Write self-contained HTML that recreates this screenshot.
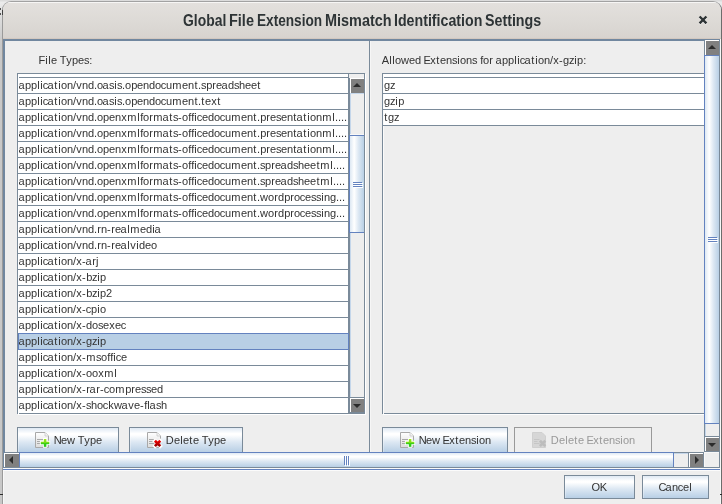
<!DOCTYPE html>
<html><head><meta charset="utf-8"><title>Global File Extension Mismatch Identification Settings</title>
<style>
html,body{margin:0;padding:0;}
body{width:722px;height:504px;overflow:hidden;background:linear-gradient(#dcdcdc 0px,#dcdcdc 1px,#ececec 2px,#e0e0e0 14px,#c8c8c8 44px,#c8c8c8 100%);position:relative;font-family:"Liberation Sans",sans-serif;}
div,span{box-sizing:border-box;}
.a{position:absolute;}
#txt{position:absolute;left:0;top:0;width:722px;height:504px;will-change:transform;}
.dj{position:absolute;white-space:nowrap;line-height:16px;height:16px;font-size:11.5px;color:#333;transform-origin:0 0;transform:scaleX(0.96);}
.dj i{position:absolute;top:0;font-style:normal;}
.tx{position:absolute;white-space:nowrap;line-height:16px;height:16px;transform-origin:0 0;}
#win{position:absolute;left:2px;top:1px;width:720px;height:520px;background:#eee;border:1px solid #9a9a9a;border-top-color:#a2a2a2;border-right-color:#6c6c6c;border-radius:9px 9px 0 0;overflow:hidden;}
#tb{position:absolute;left:0;top:0;width:718px;height:37px;background:linear-gradient(#e3e0dd,#dcd9d5 60%,#d7d3cf);border-top:1px solid #f7f6f5;border-bottom:1px solid #d2c8c0;}
</style></head><body>
<div id="win"><div id="tb"></div></div>
<svg class="a" style="left:697px;top:14px" width="12" height="12" viewBox="0 0 12 12"><path d="M2.6 3.4 L9.4 10.2 M9.4 3.4 L2.6 10.2" stroke="#f4f3f2" stroke-width="2.3" fill="none"/><path d="M2.6 2.5 L9.4 9.3 M9.4 2.5 L2.6 9.3" stroke="#2e3436" stroke-width="2.4" fill="none"/></svg>
<div class="a" style="left:3px;top:39px;width:718px;height:2px;background:#71879f;"></div>
<div class="a" style="left:3px;top:39px;width:2px;height:429px;background:#71879f;"></div>
<div class="a" style="left:3px;top:469px;width:718px;height:1px;background:#6382bf;"></div>
<div class="a" style="left:3px;top:468px;width:718px;height:1px;background:#fafafa;"></div>
<div class="a" style="left:3px;top:470px;width:718px;height:1px;background:#fbfbfb;"></div>
<div class="a" style="left:369px;top:41px;width:1px;height:411px;background:#7a8a99;"></div>
<div class="a" style="left:370px;top:41px;width:1px;height:411px;background:#f6f6f6;"></div>
<div class="a" style="left:17px;top:73px;width:348px;height:341px;background:#fff;border:1px solid #7a8a99"></div>
<div class="a" style="left:365px;top:74px;width:1px;height:341px;background:#fff;"></div>
<div class="a" style="left:18px;top:414px;width:348px;height:1px;background:#fff;"></div>
<div class="a" style="left:349px;top:74px;width:15px;height:4px;background:#eeeeee;"></div>
<div class="a" style="left:19px;top:77px;width:330px;height:1px;background:#7a8a99;"></div>
<div class="a" style="left:18px;top:93px;width:331px;height:1px;background:#7a8a99;"></div>
<div class="a" style="left:18px;top:109px;width:331px;height:1px;background:#7a8a99;"></div>
<div class="a" style="left:18px;top:125px;width:331px;height:1px;background:#7a8a99;"></div>
<div class="a" style="left:18px;top:141px;width:331px;height:1px;background:#7a8a99;"></div>
<div class="a" style="left:18px;top:157px;width:331px;height:1px;background:#7a8a99;"></div>
<div class="a" style="left:18px;top:173px;width:331px;height:1px;background:#7a8a99;"></div>
<div class="a" style="left:18px;top:189px;width:331px;height:1px;background:#7a8a99;"></div>
<div class="a" style="left:18px;top:205px;width:331px;height:1px;background:#7a8a99;"></div>
<div class="a" style="left:18px;top:221px;width:331px;height:1px;background:#7a8a99;"></div>
<div class="a" style="left:18px;top:237px;width:331px;height:1px;background:#7a8a99;"></div>
<div class="a" style="left:18px;top:253px;width:331px;height:1px;background:#7a8a99;"></div>
<div class="a" style="left:18px;top:269px;width:331px;height:1px;background:#7a8a99;"></div>
<div class="a" style="left:18px;top:285px;width:331px;height:1px;background:#7a8a99;"></div>
<div class="a" style="left:18px;top:301px;width:331px;height:1px;background:#7a8a99;"></div>
<div class="a" style="left:18px;top:317px;width:331px;height:1px;background:#7a8a99;"></div>
<div class="a" style="left:18px;top:333px;width:331px;height:1px;background:#7a8a99;"></div>
<div class="a" style="left:18px;top:349px;width:331px;height:1px;background:#7a8a99;"></div>
<div class="a" style="left:18px;top:365px;width:331px;height:1px;background:#7a8a99;"></div>
<div class="a" style="left:18px;top:381px;width:331px;height:1px;background:#7a8a99;"></div>
<div class="a" style="left:18px;top:397px;width:331px;height:1px;background:#7a8a99;"></div>
<div class="a" style="left:18px;top:413px;width:331px;height:1px;background:#7a8a99;"></div>
<div class="a" style="left:348px;top:74px;width:1px;height:340px;background:#7a8a99;"></div>
<div class="a" style="left:18px;top:413px;width:1px;height:1px;background:#fff;"></div>
<div class="a" style="left:18px;top:333px;width:331px;height:17px;background:#b8cfe5;border:1px solid #6382bf"></div>
<div class="a" style="left:349px;top:78px;width:15px;height:335px;background:#eeeeee;"></div>
<div class="a" style="left:349px;top:78px;width:1px;height:335px;background:#7a8a99;"></div>
<div class="a" style="left:350px;top:78px;width:1px;height:335px;background:#c4d6ea;"></div>
<div class="a" style="left:350px;top:78px;width:14px;height:1px;background:#fff;"></div>
<div class="a" style="left:350px;top:78px;width:1px;height:15px;background:#fff;"></div>
<div class="a" style="left:351px;top:79px;width:13px;height:14px;background:#808080;"></div>
<svg class="a" style="left:353px;top:83px" width="8" height="4" viewBox="0 0 8 4"><path d="M0 4 L4 0 L8 4 Z" fill="#2b2b2b"/></svg>
<div class="a" style="left:350px;top:93px;width:14px;height:1px;background:#c4d6ea;"></div>
<div class="a" style="left:350px;top:397px;width:14px;height:1px;background:#7a8a99;"></div>
<div class="a" style="left:350px;top:398px;width:14px;height:1px;background:#fff;"></div>
<div class="a" style="left:350px;top:398px;width:1px;height:15px;background:#fff;"></div>
<div class="a" style="left:351px;top:399px;width:13px;height:13px;background:#808080;"></div>
<div class="a" style="left:350px;top:412px;width:14px;height:1px;background:#7a8a99;"></div>
<svg class="a" style="left:353px;top:404px" width="8" height="4" viewBox="0 0 8 4"><path d="M0 0 L4 4 L8 0 Z" fill="#2b2b2b"/></svg>
<div class="a" style="left:349px;top:135px;width:15px;height:98px;background:linear-gradient(90deg,#dde8f3 0%,#ffffff 30%,#dde8f3 60%,#b8cfe5 100%);border:1px solid #6382bf;border-right:none"></div>
<div class="a" style="left:350px;top:134px;width:14px;height:1px;background:#f8f8f8;"></div>
<div class="a" style="left:353px;top:182px;width:9px;height:1px;background:#6382bf;"></div>
<div class="a" style="left:354px;top:183px;width:9px;height:1px;background:#fff;"></div>
<div class="a" style="left:353px;top:184px;width:9px;height:1px;background:#6382bf;"></div>
<div class="a" style="left:354px;top:185px;width:9px;height:1px;background:#fff;"></div>
<div class="a" style="left:353px;top:186px;width:9px;height:1px;background:#6382bf;"></div>
<div class="a" style="left:354px;top:187px;width:9px;height:1px;background:#fff;"></div>
<div class="a" style="left:382px;top:73px;width:323px;height:341px;background:#eeeeee;border:1px solid #7a8a99"></div>
<div class="a" style="left:383px;top:74px;width:321px;height:52px;background:#fff;"></div>
<div class="a" style="left:383px;top:74px;width:1px;height:339px;background:#fbfbfb;"></div>
<div class="a" style="left:383px;top:414px;width:321px;height:1px;background:#fff;"></div>
<div class="a" style="left:383px;top:413px;width:1px;height:1px;background:#fbfbfb;"></div>
<div class="a" style="left:384px;top:77px;width:320px;height:1px;background:#7a8a99;"></div>
<div class="a" style="left:383px;top:93px;width:321px;height:1px;background:#7a8a99;"></div>
<div class="a" style="left:383px;top:109px;width:321px;height:1px;background:#7a8a99;"></div>
<div class="a" style="left:383px;top:125px;width:321px;height:1px;background:#7a8a99;"></div>
<div class="a" style="left:17px;top:427px;width:102px;height:26px;background:linear-gradient(#dfe9f4 0%,#ffffff 23%,#ffffff 29%,#dde8f3 58%,#b8cfe5 100%);border:1px solid #7a8a99;box-shadow:inset 1px 0 0 rgba(255,255,255,0.3)"></div>
<svg class="a" style="left:35px;top:432px" width="16" height="17" viewBox="0 0 16 17"><defs><linearGradient id="pg35" x1="0" y1="0" x2="0" y2="1"><stop offset="0" stop-color="#ffffff"/><stop offset="1" stop-color="#dcdcdc"/></linearGradient><linearGradient id="gr35" x1="0" y1="0" x2="0" y2="1"><stop offset="0" stop-color="#a6e81c"/><stop offset="1" stop-color="#14c416"/></linearGradient><linearGradient id="rd35" x1="0" y1="0" x2="0" y2="1"><stop offset="0" stop-color="#ee0000"/><stop offset="1" stop-color="#990000"/></linearGradient></defs><path d="M0.5 0.5 H10 L13.5 4 V15.5 H0.5 Z" fill="url(#pg35)" stroke="#a8a8a8"/><path d="M10 0.5 V4 H13.5" fill="#f6f6f6" stroke="#c8c8c8" stroke-width="0.8"/><path d="M2 7.5H8M2 9.5H5M2 11.5H5" stroke="#a9a9a9" stroke-width="1"/><path d="M10.1 6.1 V15.7 M4.9 10.95 H15.2" stroke="#fff" stroke-width="4.2"/><rect x="8.85" y="7" width="2.5" height="7.8" fill="url(#gr35)"/><rect x="5.8" y="9.7" width="8.5" height="2.5" fill="url(#gr35)"/></svg>
<div class="a" style="left:129px;top:427px;width:114px;height:26px;background:linear-gradient(#dfe9f4 0%,#ffffff 23%,#ffffff 29%,#dde8f3 58%,#b8cfe5 100%);border:1px solid #7a8a99;box-shadow:inset 1px 0 0 rgba(255,255,255,0.3)"></div>
<svg class="a" style="left:147px;top:432px" width="16" height="17" viewBox="0 0 16 17"><defs><linearGradient id="pg147" x1="0" y1="0" x2="0" y2="1"><stop offset="0" stop-color="#ffffff"/><stop offset="1" stop-color="#dcdcdc"/></linearGradient><linearGradient id="gr147" x1="0" y1="0" x2="0" y2="1"><stop offset="0" stop-color="#a6e81c"/><stop offset="1" stop-color="#14c416"/></linearGradient><linearGradient id="rd147" x1="0" y1="0" x2="0" y2="1"><stop offset="0" stop-color="#ee0000"/><stop offset="1" stop-color="#990000"/></linearGradient></defs><path d="M0.5 0.5 H10 L13.5 4 V15.5 H0.5 Z" fill="url(#pg147)" stroke="#a8a8a8"/><path d="M10 0.5 V4 H13.5" fill="#f6f6f6" stroke="#c8c8c8" stroke-width="0.8"/><path d="M2 7.5H7.5M2 9.5H5.5M2 11.5H7.5" stroke="#a9a9a9" stroke-width="1"/><path d="M8.1 8.9 L13.1 13.9 M13.1 8.9 L8.1 13.9" stroke="#fff" stroke-width="3.9" stroke-linecap="square"/><path d="M7.9 8.7 L13.3 14.1 M13.3 8.7 L7.9 14.1" stroke="url(#rd147)" stroke-width="2.7"/></svg>
<div class="a" style="left:382px;top:427px;width:126px;height:26px;background:linear-gradient(#dfe9f4 0%,#ffffff 23%,#ffffff 29%,#dde8f3 58%,#b8cfe5 100%);border:1px solid #7a8a99;box-shadow:inset 1px 0 0 rgba(255,255,255,0.3)"></div>
<svg class="a" style="left:400px;top:432px" width="16" height="17" viewBox="0 0 16 17"><defs><linearGradient id="pg400" x1="0" y1="0" x2="0" y2="1"><stop offset="0" stop-color="#ffffff"/><stop offset="1" stop-color="#dcdcdc"/></linearGradient><linearGradient id="gr400" x1="0" y1="0" x2="0" y2="1"><stop offset="0" stop-color="#a6e81c"/><stop offset="1" stop-color="#14c416"/></linearGradient><linearGradient id="rd400" x1="0" y1="0" x2="0" y2="1"><stop offset="0" stop-color="#ee0000"/><stop offset="1" stop-color="#990000"/></linearGradient></defs><path d="M0.5 0.5 H10 L13.5 4 V15.5 H0.5 Z" fill="url(#pg400)" stroke="#a8a8a8"/><path d="M10 0.5 V4 H13.5" fill="#f6f6f6" stroke="#c8c8c8" stroke-width="0.8"/><path d="M2 7.5H8M2 9.5H5M2 11.5H5" stroke="#a9a9a9" stroke-width="1"/><path d="M10.1 6.1 V15.7 M4.9 10.95 H15.2" stroke="#fff" stroke-width="4.2"/><rect x="8.85" y="7" width="2.5" height="7.8" fill="url(#gr400)"/><rect x="5.8" y="9.7" width="8.5" height="2.5" fill="url(#gr400)"/></svg>
<div class="a" style="left:514px;top:427px;width:138px;height:26px;background:#eeeeee;border:1px solid #999"></div>
<svg class="a" style="left:532px;top:432px" width="16" height="17" viewBox="0 0 16 17"><path d="M0.5 0.5 H10 L13.5 4 V15.5 H0.5 Z" fill="#d6d6d6" stroke="#cfcfcf"/><path d="M2 7.5H7.5M2 9.5H5.5M2 11.5H7.5" stroke="#c6c6c6" stroke-width="1"/><path d="M7.9 8.7 L13.3 14.1 M13.3 8.7 L7.9 14.1" stroke="#bdbdbd" stroke-width="2.7"/></svg>
<div class="a" style="left:5px;top:452px;width:700px;height:16px;background:#eeeeee;"></div>
<div class="a" style="left:5px;top:452px;width:700px;height:1px;background:#7a8a99;"></div>
<div class="a" style="left:5px;top:467px;width:715px;height:1px;background:#7a8a99;"></div>
<div class="a" style="left:5px;top:453px;width:700px;height:1px;background:#c4d6ea;"></div>
<div class="a" style="left:4px;top:453px;width:15px;height:1px;background:#fff;"></div>
<div class="a" style="left:4px;top:453px;width:1px;height:14px;background:#fff;"></div>
<div class="a" style="left:5px;top:454px;width:14px;height:13px;background:#808080;"></div>
<svg class="a" style="left:9px;top:456px" width="4" height="8" viewBox="0 0 4 8"><path d="M4 0 L0 4 L4 8 Z" fill="#2b2b2b"/></svg>
<div class="a" style="left:688px;top:453px;width:1px;height:14px;background:#7a8a99;"></div>
<div class="a" style="left:689px;top:453px;width:15px;height:1px;background:#fff;"></div>
<div class="a" style="left:689px;top:453px;width:1px;height:14px;background:#fff;"></div>
<div class="a" style="left:690px;top:454px;width:13px;height:13px;background:#808080;"></div>
<div class="a" style="left:703px;top:452px;width:1px;height:16px;background:#7a8a99;"></div>
<svg class="a" style="left:695px;top:456px" width="4" height="8" viewBox="0 0 4 8"><path d="M0 0 L4 4 L0 8 Z" fill="#2b2b2b"/></svg>
<div class="a" style="left:19px;top:452px;width:655px;height:15px;background:linear-gradient(#dfe9f4 0%,#ffffff 23%,#ffffff 29%,#dde8f3 58%,#b8cfe5 100%);border:1px solid #6382bf;border-bottom:none"></div>
<div class="a" style="left:344px;top:456px;width:1px;height:9px;background:#6382bf;"></div>
<div class="a" style="left:345px;top:457px;width:1px;height:9px;background:#fff;"></div>
<div class="a" style="left:346px;top:456px;width:1px;height:9px;background:#6382bf;"></div>
<div class="a" style="left:347px;top:457px;width:1px;height:9px;background:#fff;"></div>
<div class="a" style="left:348px;top:456px;width:1px;height:9px;background:#6382bf;"></div>
<div class="a" style="left:349px;top:457px;width:1px;height:9px;background:#fff;"></div>
<div class="a" style="left:719px;top:41px;width:1px;height:427px;background:#7a8a99;"></div>
<div class="a" style="left:720px;top:39px;width:1px;height:470px;background:#f8f8f8;"></div>
<div class="a" style="left:704px;top:40px;width:15px;height:412px;background:#eeeeee;"></div>
<div class="a" style="left:704px;top:40px;width:1px;height:412px;background:#7a8a99;"></div>
<div class="a" style="left:705px;top:40px;width:1px;height:412px;background:#c4d6ea;"></div>
<div class="a" style="left:705px;top:40px;width:14px;height:1px;background:#fff;"></div>
<div class="a" style="left:705px;top:40px;width:1px;height:15px;background:#fff;"></div>
<div class="a" style="left:706px;top:41px;width:13px;height:14px;background:#808080;"></div>
<svg class="a" style="left:708px;top:45px" width="8" height="4" viewBox="0 0 8 4"><path d="M0 4 L4 0 L8 4 Z" fill="#2b2b2b"/></svg>
<div class="a" style="left:705px;top:55px;width:14px;height:1px;background:#c4d6ea;"></div>
<div class="a" style="left:705px;top:436px;width:14px;height:1px;background:#7a8a99;"></div>
<div class="a" style="left:705px;top:437px;width:14px;height:1px;background:#fff;"></div>
<div class="a" style="left:705px;top:437px;width:1px;height:15px;background:#fff;"></div>
<div class="a" style="left:706px;top:438px;width:13px;height:13px;background:#808080;"></div>
<div class="a" style="left:705px;top:451px;width:14px;height:1px;background:#7a8a99;"></div>
<svg class="a" style="left:708px;top:443px" width="8" height="4" viewBox="0 0 8 4"><path d="M0 0 L4 4 L8 0 Z" fill="#2b2b2b"/></svg>
<div class="a" style="left:704px;top:55px;width:15px;height:369px;background:linear-gradient(90deg,#dde8f3 0%,#ffffff 30%,#dde8f3 60%,#b8cfe5 100%);border:1px solid #6382bf;border-right:none"></div>
<div class="a" style="left:708px;top:237px;width:9px;height:1px;background:#6382bf;"></div>
<div class="a" style="left:709px;top:238px;width:9px;height:1px;background:#fff;"></div>
<div class="a" style="left:708px;top:239px;width:9px;height:1px;background:#6382bf;"></div>
<div class="a" style="left:709px;top:240px;width:9px;height:1px;background:#fff;"></div>
<div class="a" style="left:708px;top:241px;width:9px;height:1px;background:#6382bf;"></div>
<div class="a" style="left:709px;top:242px;width:9px;height:1px;background:#fff;"></div>
<div class="a" style="left:704px;top:452px;width:15px;height:15px;background:#eeeeee;"></div>
<div class="a" style="left:704px;top:452px;width:15px;height:1px;background:#f8f8f8;"></div>
<div class="a" style="left:704px;top:452px;width:1px;height:15px;background:#f8f8f8;"></div>
<div class="a" style="left:564px;top:475px;width:71px;height:24px;background:linear-gradient(#dfe9f4 0%,#ffffff 23%,#ffffff 29%,#dde8f3 58%,#b8cfe5 100%);border:1px solid #7a8a99;box-shadow:inset 1px 0 0 rgba(255,255,255,0.3)"></div>
<div class="a" style="left:642px;top:475px;width:67px;height:24px;background:linear-gradient(#dfe9f4 0%,#ffffff 23%,#ffffff 29%,#dde8f3 58%,#b8cfe5 100%);border:1px solid #7a8a99;box-shadow:inset 1px 0 0 rgba(255,255,255,0.3)"></div>
<div class="a" style="left:3px;top:471px;width:1px;height:40px;background:#f8f8f8;"></div>
<div class="a" style="left:0px;top:494px;width:3px;height:1px;background:#2a2a2a;"></div>
<div class="a" style="left:0px;top:8px;width:1px;height:2px;background:#555;"></div>
<div class="a" style="left:0px;top:13px;width:1px;height:2px;background:#555;"></div>
<div class="a" style="left:2px;top:10px;width:1px;height:5px;background:#444;"></div>
<div class="a" style="left:720px;top:494px;width:2px;height:1px;background:#2a2a2a;"></div>
<div id="txt">
<span class="tx" id="t1" style="left:183.26px;top:12.5px;font-size:16px;font-weight:bold;color:#2e3436;letter-spacing:0.000px;transform:scaleX(0.8687);">Global</span>
<span class="tx" id="t2" style="left:228.58px;top:12.5px;font-size:16px;font-weight:bold;color:#2e3436;letter-spacing:0.000px;transform:scaleX(0.9043);">File</span>
<span class="tx" id="t3" style="left:257.04px;top:12.5px;font-size:16px;font-weight:bold;color:#2e3436;letter-spacing:0.000px;transform:scaleX(0.8511);">Extension</span>
<span class="tx" id="t4" style="left:324.59px;top:12.5px;font-size:16px;font-weight:bold;color:#2e3436;letter-spacing:0.000px;transform:scaleX(0.9017);">Mismatch</span>
<span class="tx" id="t5" style="left:394.10px;top:12.5px;font-size:16px;font-weight:bold;color:#2e3436;letter-spacing:0.000px;transform:scaleX(0.8872);">Identification</span>
<span class="tx" id="t6" style="left:485.16px;top:12.5px;font-size:16px;font-weight:bold;color:#2e3436;letter-spacing:0.000px;transform:scaleX(0.8903);">Settings</span>
<div class="dj" id="r0" style="left:19px;top:77.0px;"><i style="left:-0.44px">a</i><i style="left:6.38px">p</i><i style="left:12.63px">p</i><i style="left:18.90px">l</i><i style="left:22.04px">i</i><i style="left:24.83px">c</i><i style="left:29.77px">a</i><i style="left:36.85px">t</i><i style="left:40.79px">i</i><i style="left:43.71px">o</i><i style="left:50.09px">n</i><i style="left:56.39px">/</i><i style="left:59.55px">v</i><i style="left:65.72px">n</i><i style="left:71.89px">d</i><i style="left:78.16px">.</i><i style="left:81.21px">o</i><i style="left:87.06px">a</i><i style="left:93.64px">s</i><i style="left:99.12px">i</i><i style="left:101.97px">s</i><i style="left:107.33px">.</i><i style="left:110.37px">o</i><i style="left:116.80px">p</i><i style="left:122.91px">e</i><i style="left:129.26px">n</i><i style="left:135.44px">d</i><i style="left:141.62px">o</i><i style="left:147.75px">c</i><i style="left:153.17px">u</i><i style="left:159.63px">m</i><i style="left:169.79px">e</i><i style="left:176.13px">n</i><i style="left:182.69px">t</i><i style="left:186.49px">.</i><i style="left:189.47px">s</i><i style="left:194.93px">p</i><i style="left:201.43px">r</i><i style="left:205.20px">e</i><i style="left:211.02px">a</i><i style="left:217.73px">d</i><i style="left:223.84px">s</i><i style="left:229.24px">h</i><i style="left:235.41px">e</i><i style="left:241.66px">e</i><i style="left:248.31px">t</i></div>
<div class="dj" id="r1" style="left:19px;top:93.0px;"><i style="left:-0.44px">a</i><i style="left:6.38px">p</i><i style="left:12.63px">p</i><i style="left:18.90px">l</i><i style="left:22.04px">i</i><i style="left:24.83px">c</i><i style="left:29.77px">a</i><i style="left:36.85px">t</i><i style="left:40.79px">i</i><i style="left:43.71px">o</i><i style="left:50.09px">n</i><i style="left:56.39px">/</i><i style="left:59.55px">v</i><i style="left:65.72px">n</i><i style="left:71.89px">d</i><i style="left:78.16px">.</i><i style="left:81.21px">o</i><i style="left:87.06px">a</i><i style="left:93.64px">s</i><i style="left:99.12px">i</i><i style="left:101.97px">s</i><i style="left:107.33px">.</i><i style="left:110.37px">o</i><i style="left:116.80px">p</i><i style="left:122.91px">e</i><i style="left:129.26px">n</i><i style="left:135.44px">d</i><i style="left:141.62px">o</i><i style="left:147.75px">c</i><i style="left:153.17px">u</i><i style="left:159.63px">m</i><i style="left:169.79px">e</i><i style="left:176.13px">n</i><i style="left:182.69px">t</i><i style="left:186.49px">.</i><i style="left:189.98px">t</i><i style="left:193.74px">e</i><i style="left:200.15px">x</i><i style="left:206.64px">t</i></div>
<div class="dj" id="r2" style="left:19px;top:109.0px;"><i style="left:-0.44px">a</i><i style="left:6.38px">p</i><i style="left:12.63px">p</i><i style="left:18.90px">l</i><i style="left:22.04px">i</i><i style="left:24.83px">c</i><i style="left:29.77px">a</i><i style="left:36.85px">t</i><i style="left:40.79px">i</i><i style="left:43.71px">o</i><i style="left:50.09px">n</i><i style="left:56.39px">/</i><i style="left:59.55px">v</i><i style="left:65.72px">n</i><i style="left:71.89px">d</i><i style="left:78.16px">.</i><i style="left:81.21px">o</i><i style="left:87.63px">p</i><i style="left:93.74px">e</i><i style="left:100.09px">n</i><i style="left:106.40px">x</i><i style="left:112.76px">m</i><i style="left:123.07px">l</i><i style="left:126.39px">f</i><i style="left:129.12px">o</i><i style="left:135.80px">r</i><i style="left:139.84px">m</i><i style="left:149.56px">a</i><i style="left:156.64px">t</i><i style="left:160.30px">s</i><i style="left:165.57px">-</i><i style="left:169.75px">o</i><i style="left:176.39px">f</i><i style="left:179.51px">f</i><i style="left:182.45px">i</i><i style="left:185.25px">c</i><i style="left:190.62px">e</i><i style="left:196.89px">d</i><i style="left:203.08px">o</i><i style="left:209.21px">c</i><i style="left:214.63px">u</i><i style="left:221.09px">m</i><i style="left:231.24px">e</i><i style="left:237.59px">n</i><i style="left:244.14px">t</i><i style="left:247.95px">.</i><i style="left:251.18px">p</i><i style="left:257.68px">r</i><i style="left:261.45px">e</i><i style="left:267.59px">s</i><i style="left:272.91px">e</i><i style="left:279.26px">n</i><i style="left:285.81px">t</i><i style="left:289.14px">a</i><i style="left:296.23px">t</i><i style="left:300.16px">i</i><i style="left:303.08px">o</i><i style="left:309.47px">n</i><i style="left:315.88px">m</i><i style="left:326.20px">l</i><i style="left:329.20px">.</i><i style="left:332.33px">.</i><i style="left:335.45px">.</i><i style="left:338.58px">.</i></div>
<div class="dj" id="r3" style="left:19px;top:125.0px;"><i style="left:-0.44px">a</i><i style="left:6.38px">p</i><i style="left:12.63px">p</i><i style="left:18.90px">l</i><i style="left:22.04px">i</i><i style="left:24.83px">c</i><i style="left:29.77px">a</i><i style="left:36.85px">t</i><i style="left:40.79px">i</i><i style="left:43.71px">o</i><i style="left:50.09px">n</i><i style="left:56.39px">/</i><i style="left:59.55px">v</i><i style="left:65.72px">n</i><i style="left:71.89px">d</i><i style="left:78.16px">.</i><i style="left:81.21px">o</i><i style="left:87.63px">p</i><i style="left:93.74px">e</i><i style="left:100.09px">n</i><i style="left:106.40px">x</i><i style="left:112.76px">m</i><i style="left:123.07px">l</i><i style="left:126.39px">f</i><i style="left:129.12px">o</i><i style="left:135.80px">r</i><i style="left:139.84px">m</i><i style="left:149.56px">a</i><i style="left:156.64px">t</i><i style="left:160.30px">s</i><i style="left:165.57px">-</i><i style="left:169.75px">o</i><i style="left:176.39px">f</i><i style="left:179.51px">f</i><i style="left:182.45px">i</i><i style="left:185.25px">c</i><i style="left:190.62px">e</i><i style="left:196.89px">d</i><i style="left:203.08px">o</i><i style="left:209.21px">c</i><i style="left:214.63px">u</i><i style="left:221.09px">m</i><i style="left:231.24px">e</i><i style="left:237.59px">n</i><i style="left:244.14px">t</i><i style="left:247.95px">.</i><i style="left:251.18px">p</i><i style="left:257.68px">r</i><i style="left:261.45px">e</i><i style="left:267.59px">s</i><i style="left:272.91px">e</i><i style="left:279.26px">n</i><i style="left:285.81px">t</i><i style="left:289.14px">a</i><i style="left:296.23px">t</i><i style="left:300.16px">i</i><i style="left:303.08px">o</i><i style="left:309.47px">n</i><i style="left:315.88px">m</i><i style="left:326.20px">l</i><i style="left:329.20px">.</i><i style="left:332.33px">.</i><i style="left:335.45px">.</i><i style="left:338.58px">.</i></div>
<div class="dj" id="r4" style="left:19px;top:141.0px;"><i style="left:-0.44px">a</i><i style="left:6.38px">p</i><i style="left:12.63px">p</i><i style="left:18.90px">l</i><i style="left:22.04px">i</i><i style="left:24.83px">c</i><i style="left:29.77px">a</i><i style="left:36.85px">t</i><i style="left:40.79px">i</i><i style="left:43.71px">o</i><i style="left:50.09px">n</i><i style="left:56.39px">/</i><i style="left:59.55px">v</i><i style="left:65.72px">n</i><i style="left:71.89px">d</i><i style="left:78.16px">.</i><i style="left:81.21px">o</i><i style="left:87.63px">p</i><i style="left:93.74px">e</i><i style="left:100.09px">n</i><i style="left:106.40px">x</i><i style="left:112.76px">m</i><i style="left:123.07px">l</i><i style="left:126.39px">f</i><i style="left:129.12px">o</i><i style="left:135.80px">r</i><i style="left:139.84px">m</i><i style="left:149.56px">a</i><i style="left:156.64px">t</i><i style="left:160.30px">s</i><i style="left:165.57px">-</i><i style="left:169.75px">o</i><i style="left:176.39px">f</i><i style="left:179.51px">f</i><i style="left:182.45px">i</i><i style="left:185.25px">c</i><i style="left:190.62px">e</i><i style="left:196.89px">d</i><i style="left:203.08px">o</i><i style="left:209.21px">c</i><i style="left:214.63px">u</i><i style="left:221.09px">m</i><i style="left:231.24px">e</i><i style="left:237.59px">n</i><i style="left:244.14px">t</i><i style="left:247.95px">.</i><i style="left:251.18px">p</i><i style="left:257.68px">r</i><i style="left:261.45px">e</i><i style="left:267.59px">s</i><i style="left:272.91px">e</i><i style="left:279.26px">n</i><i style="left:285.81px">t</i><i style="left:289.14px">a</i><i style="left:296.23px">t</i><i style="left:300.16px">i</i><i style="left:303.08px">o</i><i style="left:309.47px">n</i><i style="left:315.88px">m</i><i style="left:326.20px">l</i><i style="left:329.20px">.</i><i style="left:332.33px">.</i><i style="left:335.45px">.</i><i style="left:338.58px">.</i></div>
<div class="dj" id="r5" style="left:19px;top:157.0px;"><i style="left:-0.44px">a</i><i style="left:6.38px">p</i><i style="left:12.63px">p</i><i style="left:18.90px">l</i><i style="left:22.04px">i</i><i style="left:24.83px">c</i><i style="left:29.77px">a</i><i style="left:36.85px">t</i><i style="left:40.79px">i</i><i style="left:43.71px">o</i><i style="left:50.09px">n</i><i style="left:56.39px">/</i><i style="left:59.55px">v</i><i style="left:65.72px">n</i><i style="left:71.89px">d</i><i style="left:78.16px">.</i><i style="left:81.21px">o</i><i style="left:87.63px">p</i><i style="left:93.74px">e</i><i style="left:100.09px">n</i><i style="left:106.40px">x</i><i style="left:112.76px">m</i><i style="left:123.07px">l</i><i style="left:126.39px">f</i><i style="left:129.12px">o</i><i style="left:135.80px">r</i><i style="left:139.84px">m</i><i style="left:149.56px">a</i><i style="left:156.64px">t</i><i style="left:160.30px">s</i><i style="left:165.57px">-</i><i style="left:169.75px">o</i><i style="left:176.39px">f</i><i style="left:179.51px">f</i><i style="left:182.45px">i</i><i style="left:185.25px">c</i><i style="left:190.62px">e</i><i style="left:196.89px">d</i><i style="left:203.08px">o</i><i style="left:209.21px">c</i><i style="left:214.63px">u</i><i style="left:221.09px">m</i><i style="left:231.24px">e</i><i style="left:237.59px">n</i><i style="left:244.14px">t</i><i style="left:247.95px">.</i><i style="left:250.93px">s</i><i style="left:256.38px">p</i><i style="left:262.89px">r</i><i style="left:266.66px">e</i><i style="left:272.48px">a</i><i style="left:279.19px">d</i><i style="left:285.30px">s</i><i style="left:290.70px">h</i><i style="left:296.87px">e</i><i style="left:303.12px">e</i><i style="left:309.77px">t</i><i style="left:313.80px">m</i><i style="left:324.11px">l</i><i style="left:327.12px">.</i><i style="left:330.24px">.</i><i style="left:333.37px">.</i><i style="left:336.49px">.</i></div>
<div class="dj" id="r6" style="left:19px;top:173.0px;"><i style="left:-0.44px">a</i><i style="left:6.38px">p</i><i style="left:12.63px">p</i><i style="left:18.90px">l</i><i style="left:22.04px">i</i><i style="left:24.83px">c</i><i style="left:29.77px">a</i><i style="left:36.85px">t</i><i style="left:40.79px">i</i><i style="left:43.71px">o</i><i style="left:50.09px">n</i><i style="left:56.39px">/</i><i style="left:59.55px">v</i><i style="left:65.72px">n</i><i style="left:71.89px">d</i><i style="left:78.16px">.</i><i style="left:81.21px">o</i><i style="left:87.63px">p</i><i style="left:93.74px">e</i><i style="left:100.09px">n</i><i style="left:106.40px">x</i><i style="left:112.76px">m</i><i style="left:123.07px">l</i><i style="left:126.39px">f</i><i style="left:129.12px">o</i><i style="left:135.80px">r</i><i style="left:139.84px">m</i><i style="left:149.56px">a</i><i style="left:156.64px">t</i><i style="left:160.30px">s</i><i style="left:165.57px">-</i><i style="left:169.75px">o</i><i style="left:176.39px">f</i><i style="left:179.51px">f</i><i style="left:182.45px">i</i><i style="left:185.25px">c</i><i style="left:190.62px">e</i><i style="left:196.89px">d</i><i style="left:203.08px">o</i><i style="left:209.21px">c</i><i style="left:214.63px">u</i><i style="left:221.09px">m</i><i style="left:231.24px">e</i><i style="left:237.59px">n</i><i style="left:244.14px">t</i><i style="left:247.95px">.</i><i style="left:250.93px">s</i><i style="left:256.38px">p</i><i style="left:262.89px">r</i><i style="left:266.66px">e</i><i style="left:272.48px">a</i><i style="left:279.19px">d</i><i style="left:285.30px">s</i><i style="left:290.70px">h</i><i style="left:296.87px">e</i><i style="left:303.12px">e</i><i style="left:309.77px">t</i><i style="left:313.80px">m</i><i style="left:324.11px">l</i><i style="left:327.12px">.</i><i style="left:330.24px">.</i><i style="left:333.37px">.</i><i style="left:336.49px">.</i></div>
<div class="dj" id="r7" style="left:19px;top:189.0px;"><i style="left:-0.44px">a</i><i style="left:6.38px">p</i><i style="left:12.63px">p</i><i style="left:18.90px">l</i><i style="left:22.04px">i</i><i style="left:24.83px">c</i><i style="left:29.77px">a</i><i style="left:36.85px">t</i><i style="left:40.79px">i</i><i style="left:43.71px">o</i><i style="left:50.09px">n</i><i style="left:56.39px">/</i><i style="left:59.55px">v</i><i style="left:65.72px">n</i><i style="left:71.89px">d</i><i style="left:78.16px">.</i><i style="left:81.21px">o</i><i style="left:87.63px">p</i><i style="left:93.74px">e</i><i style="left:100.09px">n</i><i style="left:106.40px">x</i><i style="left:112.76px">m</i><i style="left:123.07px">l</i><i style="left:126.39px">f</i><i style="left:129.12px">o</i><i style="left:135.80px">r</i><i style="left:139.84px">m</i><i style="left:149.56px">a</i><i style="left:156.64px">t</i><i style="left:160.30px">s</i><i style="left:165.57px">-</i><i style="left:169.75px">o</i><i style="left:176.39px">f</i><i style="left:179.51px">f</i><i style="left:182.45px">i</i><i style="left:185.25px">c</i><i style="left:190.62px">e</i><i style="left:196.89px">d</i><i style="left:203.08px">o</i><i style="left:209.21px">c</i><i style="left:214.63px">u</i><i style="left:221.09px">m</i><i style="left:231.24px">e</i><i style="left:237.59px">n</i><i style="left:244.14px">t</i><i style="left:247.95px">.</i><i style="left:251.10px">w</i><i style="left:259.33px">o</i><i style="left:266.01px">r</i><i style="left:269.81px">d</i><i style="left:276.18px">p</i><i style="left:282.68px">r</i><i style="left:286.42px">o</i><i style="left:292.54px">c</i><i style="left:297.91px">e</i><i style="left:304.05px">s</i><i style="left:309.26px">s</i><i style="left:314.74px">i</i><i style="left:317.80px">n</i><i style="left:323.98px">g</i><i style="left:330.24px">.</i><i style="left:333.37px">.</i><i style="left:336.49px">.</i></div>
<div class="dj" id="r8" style="left:19px;top:205.0px;"><i style="left:-0.44px">a</i><i style="left:6.38px">p</i><i style="left:12.63px">p</i><i style="left:18.90px">l</i><i style="left:22.04px">i</i><i style="left:24.83px">c</i><i style="left:29.77px">a</i><i style="left:36.85px">t</i><i style="left:40.79px">i</i><i style="left:43.71px">o</i><i style="left:50.09px">n</i><i style="left:56.39px">/</i><i style="left:59.55px">v</i><i style="left:65.72px">n</i><i style="left:71.89px">d</i><i style="left:78.16px">.</i><i style="left:81.21px">o</i><i style="left:87.63px">p</i><i style="left:93.74px">e</i><i style="left:100.09px">n</i><i style="left:106.40px">x</i><i style="left:112.76px">m</i><i style="left:123.07px">l</i><i style="left:126.39px">f</i><i style="left:129.12px">o</i><i style="left:135.80px">r</i><i style="left:139.84px">m</i><i style="left:149.56px">a</i><i style="left:156.64px">t</i><i style="left:160.30px">s</i><i style="left:165.57px">-</i><i style="left:169.75px">o</i><i style="left:176.39px">f</i><i style="left:179.51px">f</i><i style="left:182.45px">i</i><i style="left:185.25px">c</i><i style="left:190.62px">e</i><i style="left:196.89px">d</i><i style="left:203.08px">o</i><i style="left:209.21px">c</i><i style="left:214.63px">u</i><i style="left:221.09px">m</i><i style="left:231.24px">e</i><i style="left:237.59px">n</i><i style="left:244.14px">t</i><i style="left:247.95px">.</i><i style="left:251.10px">w</i><i style="left:259.33px">o</i><i style="left:266.01px">r</i><i style="left:269.81px">d</i><i style="left:276.18px">p</i><i style="left:282.68px">r</i><i style="left:286.42px">o</i><i style="left:292.54px">c</i><i style="left:297.91px">e</i><i style="left:304.05px">s</i><i style="left:309.26px">s</i><i style="left:314.74px">i</i><i style="left:317.80px">n</i><i style="left:323.98px">g</i><i style="left:330.24px">.</i><i style="left:333.37px">.</i><i style="left:336.49px">.</i></div>
<div class="dj" id="r9" style="left:19px;top:221.0px;"><i style="left:-0.44px">a</i><i style="left:6.38px">p</i><i style="left:12.63px">p</i><i style="left:18.90px">l</i><i style="left:22.04px">i</i><i style="left:24.83px">c</i><i style="left:29.77px">a</i><i style="left:36.85px">t</i><i style="left:40.79px">i</i><i style="left:43.71px">o</i><i style="left:50.09px">n</i><i style="left:56.39px">/</i><i style="left:59.55px">v</i><i style="left:65.72px">n</i><i style="left:71.89px">d</i><i style="left:78.16px">.</i><i style="left:81.64px">r</i><i style="left:85.51px">n</i><i style="left:91.61px">-</i><i style="left:96.22px">r</i><i style="left:99.99px">e</i><i style="left:105.81px">a</i><i style="left:112.65px">l</i><i style="left:115.88px">m</i><i style="left:126.04px">e</i><i style="left:132.31px">d</i><i style="left:138.70px">i</i><i style="left:141.23px">a</i></div>
<div class="dj" id="r10" style="left:19px;top:237.0px;"><i style="left:-0.44px">a</i><i style="left:6.38px">p</i><i style="left:12.63px">p</i><i style="left:18.90px">l</i><i style="left:22.04px">i</i><i style="left:24.83px">c</i><i style="left:29.77px">a</i><i style="left:36.85px">t</i><i style="left:40.79px">i</i><i style="left:43.71px">o</i><i style="left:50.09px">n</i><i style="left:56.39px">/</i><i style="left:59.55px">v</i><i style="left:65.72px">n</i><i style="left:71.89px">d</i><i style="left:78.16px">.</i><i style="left:81.64px">r</i><i style="left:85.51px">n</i><i style="left:91.61px">-</i><i style="left:96.22px">r</i><i style="left:99.99px">e</i><i style="left:105.81px">a</i><i style="left:112.65px">l</i><i style="left:115.80px">v</i><i style="left:122.04px">i</i><i style="left:125.02px">d</i><i style="left:131.24px">e</i><i style="left:137.46px">o</i></div>
<div class="dj" id="r11" style="left:19px;top:253.0px;"><i style="left:-0.44px">a</i><i style="left:6.38px">p</i><i style="left:12.63px">p</i><i style="left:18.90px">l</i><i style="left:22.04px">i</i><i style="left:24.83px">c</i><i style="left:29.77px">a</i><i style="left:36.85px">t</i><i style="left:40.79px">i</i><i style="left:43.71px">o</i><i style="left:50.09px">n</i><i style="left:56.39px">/</i><i style="left:59.53px">x</i><i style="left:65.57px">-</i><i style="left:69.35px">a</i><i style="left:76.43px">r</i><i style="left:80.31px">j</i></div>
<div class="dj" id="r12" style="left:19px;top:269.0px;"><i style="left:-0.44px">a</i><i style="left:6.38px">p</i><i style="left:12.63px">p</i><i style="left:18.90px">l</i><i style="left:22.04px">i</i><i style="left:24.83px">c</i><i style="left:29.77px">a</i><i style="left:36.85px">t</i><i style="left:40.79px">i</i><i style="left:43.71px">o</i><i style="left:50.09px">n</i><i style="left:56.39px">/</i><i style="left:59.53px">x</i><i style="left:65.57px">-</i><i style="left:69.93px">b</i><i style="left:75.93px">z</i><i style="left:81.41px">i</i><i style="left:84.51px">p</i></div>
<div class="dj" id="r13" style="left:19px;top:285.0px;"><i style="left:-0.44px">a</i><i style="left:6.38px">p</i><i style="left:12.63px">p</i><i style="left:18.90px">l</i><i style="left:22.04px">i</i><i style="left:24.83px">c</i><i style="left:29.77px">a</i><i style="left:36.85px">t</i><i style="left:40.79px">i</i><i style="left:43.71px">o</i><i style="left:50.09px">n</i><i style="left:56.39px">/</i><i style="left:59.53px">x</i><i style="left:65.57px">-</i><i style="left:69.93px">b</i><i style="left:75.93px">z</i><i style="left:81.41px">i</i><i style="left:84.51px">p</i><i style="left:90.57px">2</i></div>
<div class="dj" id="r14" style="left:19px;top:301.0px;"><i style="left:-0.44px">a</i><i style="left:6.38px">p</i><i style="left:12.63px">p</i><i style="left:18.90px">l</i><i style="left:22.04px">i</i><i style="left:24.83px">c</i><i style="left:29.77px">a</i><i style="left:36.85px">t</i><i style="left:40.79px">i</i><i style="left:43.71px">o</i><i style="left:50.09px">n</i><i style="left:56.39px">/</i><i style="left:59.53px">x</i><i style="left:65.57px">-</i><i style="left:69.62px">c</i><i style="left:75.13px">p</i><i style="left:81.41px">i</i><i style="left:84.33px">o</i></div>
<div class="dj" id="r15" style="left:19px;top:317.0px;"><i style="left:-0.44px">a</i><i style="left:6.38px">p</i><i style="left:12.63px">p</i><i style="left:18.90px">l</i><i style="left:22.04px">i</i><i style="left:24.83px">c</i><i style="left:29.77px">a</i><i style="left:36.85px">t</i><i style="left:40.79px">i</i><i style="left:43.71px">o</i><i style="left:50.09px">n</i><i style="left:56.39px">/</i><i style="left:59.53px">x</i><i style="left:65.57px">-</i><i style="left:69.81px">d</i><i style="left:76.00px">o</i><i style="left:82.18px">s</i><i style="left:87.49px">e</i><i style="left:93.90px">x</i><i style="left:99.99px">e</i><i style="left:106.08px">c</i></div>
<div class="dj" id="r16" style="left:19px;top:333.0px;"><i style="left:-0.44px">a</i><i style="left:6.38px">p</i><i style="left:12.63px">p</i><i style="left:18.90px">l</i><i style="left:22.04px">i</i><i style="left:24.83px">c</i><i style="left:29.77px">a</i><i style="left:36.85px">t</i><i style="left:40.79px">i</i><i style="left:43.71px">o</i><i style="left:50.09px">n</i><i style="left:56.39px">/</i><i style="left:59.53px">x</i><i style="left:65.57px">-</i><i style="left:69.81px">g</i><i style="left:75.93px">z</i><i style="left:81.41px">i</i><i style="left:84.51px">p</i></div>
<div class="dj" id="r17" style="left:19px;top:349.0px;"><i style="left:-0.44px">a</i><i style="left:6.38px">p</i><i style="left:12.63px">p</i><i style="left:18.90px">l</i><i style="left:22.04px">i</i><i style="left:24.83px">c</i><i style="left:29.77px">a</i><i style="left:36.85px">t</i><i style="left:40.79px">i</i><i style="left:43.71px">o</i><i style="left:50.09px">n</i><i style="left:56.39px">/</i><i style="left:59.53px">x</i><i style="left:65.57px">-</i><i style="left:70.05px">m</i><i style="left:80.09px">s</i><i style="left:85.37px">o</i><i style="left:92.01px">f</i><i style="left:95.14px">f</i><i style="left:98.08px">i</i><i style="left:100.87px">c</i><i style="left:106.24px">e</i></div>
<div class="dj" id="r18" style="left:19px;top:365.0px;"><i style="left:-0.44px">a</i><i style="left:6.38px">p</i><i style="left:12.63px">p</i><i style="left:18.90px">l</i><i style="left:22.04px">i</i><i style="left:24.83px">c</i><i style="left:29.77px">a</i><i style="left:36.85px">t</i><i style="left:40.79px">i</i><i style="left:43.71px">o</i><i style="left:50.09px">n</i><i style="left:56.39px">/</i><i style="left:59.53px">x</i><i style="left:65.57px">-</i><i style="left:69.75px">o</i><i style="left:76.00px">o</i><i style="left:82.45px">x</i><i style="left:88.80px">m</i><i style="left:99.11px">l</i></div>
<div class="dj" id="r19" style="left:19px;top:381.0px;"><i style="left:-0.44px">a</i><i style="left:6.38px">p</i><i style="left:12.63px">p</i><i style="left:18.90px">l</i><i style="left:22.04px">i</i><i style="left:24.83px">c</i><i style="left:29.77px">a</i><i style="left:36.85px">t</i><i style="left:40.79px">i</i><i style="left:43.71px">o</i><i style="left:50.09px">n</i><i style="left:56.39px">/</i><i style="left:59.53px">x</i><i style="left:65.57px">-</i><i style="left:70.18px">r</i><i style="left:73.52px">a</i><i style="left:80.59px">r</i><i style="left:84.32px">-</i><i style="left:88.37px">c</i><i style="left:93.71px">o</i><i style="left:100.26px">m</i><i style="left:110.55px">p</i><i style="left:117.05px">r</i><i style="left:120.83px">e</i><i style="left:126.97px">s</i><i style="left:132.18px">s</i><i style="left:137.49px">e</i><i style="left:143.77px">d</i></div>
<div class="dj" id="r20" style="left:19px;top:397.0px;"><i style="left:-0.44px">a</i><i style="left:6.38px">p</i><i style="left:12.63px">p</i><i style="left:18.90px">l</i><i style="left:22.04px">i</i><i style="left:24.83px">c</i><i style="left:29.77px">a</i><i style="left:36.85px">t</i><i style="left:40.79px">i</i><i style="left:43.71px">o</i><i style="left:50.09px">n</i><i style="left:56.39px">/</i><i style="left:59.53px">x</i><i style="left:65.57px">-</i><i style="left:69.68px">s</i><i style="left:75.08px">h</i><i style="left:81.21px">o</i><i style="left:87.33px">c</i><i style="left:92.88px">k</i><i style="left:99.02px">w</i><i style="left:106.85px">a</i><i style="left:113.72px">v</i><i style="left:119.79px">e</i><i style="left:125.99px">-</i><i style="left:130.55px">f</i><i style="left:133.49px">l</i><i style="left:136.02px">a</i><i style="left:142.59px">s</i><i style="left:147.99px">h</i></div>
<div class="dj" id="l1" style="left:39px;top:52.0px;"><i style="left:-0.58px">F</i><i style="left:6.41px">i</i><i style="left:9.53px">l</i><i style="left:12.49px">e</i><i style="left:21.52px">T</i><i style="left:28.30px">y</i><i style="left:34.51px">p</i><i style="left:40.62px">e</i><i style="left:46.76px">s</i><i style="left:52.23px">:</i></div>
<div class="dj" id="l2" style="left:382px;top:52.0px;"><i style="left:-0.31px">A</i><i style="left:7.45px">l</i><i style="left:10.57px">l</i><i style="left:13.50px">o</i><i style="left:19.85px">w</i><i style="left:28.12px">e</i><i style="left:34.39px">d</i><i style="left:43.12px">E</i><i style="left:50.15px">x</i><i style="left:56.64px">t</i><i style="left:60.41px">e</i><i style="left:66.76px">n</i><i style="left:72.80px">s</i><i style="left:78.29px">i</i><i style="left:81.21px">o</i><i style="left:87.59px">n</i><i style="left:93.64px">s</i><i style="left:102.43px">f</i><i style="left:105.17px">o</i><i style="left:111.84px">r</i><i style="left:118.31px">a</i><i style="left:125.13px">p</i><i style="left:131.38px">p</i><i style="left:137.65px">l</i><i style="left:140.79px">i</i><i style="left:143.58px">c</i><i style="left:148.52px">a</i><i style="left:155.60px">t</i><i style="left:159.54px">i</i><i style="left:162.46px">o</i><i style="left:168.84px">n</i><i style="left:175.14px">/</i><i style="left:178.28px">x</i><i style="left:184.32px">-</i><i style="left:188.56px">g</i><i style="left:194.68px">z</i><i style="left:200.16px">i</i><i style="left:203.26px">p</i><i style="left:209.52px">:</i></div>
<div class="dj" id="e1" style="left:384px;top:77.0px;"><i style="left:0.02px">g</i><i style="left:6.14px">z</i></div>
<div class="dj" id="e2" style="left:384px;top:93.0px;"><i style="left:0.02px">g</i><i style="left:6.14px">z</i><i style="left:11.62px">i</i><i style="left:14.72px">p</i></div>
<div class="dj" id="e3" style="left:384px;top:109.0px;"><i style="left:0.39px">t</i><i style="left:4.19px">g</i><i style="left:10.30px">z</i></div>
<div class="dj" id="b1" style="left:54px;top:432.0px;"><i style="left:-0.30px">N</i><i style="left:7.29px">e</i><i style="left:13.60px">w</i><i style="left:24.64px">T</i><i style="left:31.42px">y</i><i style="left:37.63px">p</i><i style="left:43.74px">e</i></div>
<div class="dj" id="b2" style="left:166px;top:432.0px;"><i style="left:-0.18px">D</i><i style="left:8.33px">e</i><i style="left:14.74px">l</i><i style="left:17.70px">e</i><i style="left:24.35px">t</i><i style="left:28.12px">e</i><i style="left:37.14px">T</i><i style="left:43.92px">y</i><i style="left:50.13px">p</i><i style="left:56.24px">e</i></div>
<div class="dj" id="b3" style="left:419px;top:432.0px;"><i style="left:-0.30px">N</i><i style="left:7.29px">e</i><i style="left:13.60px">w</i><i style="left:24.37px">E</i><i style="left:31.40px">x</i><i style="left:37.89px">t</i><i style="left:41.66px">e</i><i style="left:48.01px">n</i><i style="left:54.05px">s</i><i style="left:59.54px">i</i><i style="left:62.46px">o</i><i style="left:68.84px">n</i></div>
<div class="dj" id="b4" style="left:551px;top:432.0px;color:#999;"><i style="left:-0.18px">D</i><i style="left:8.33px">e</i><i style="left:14.74px">l</i><i style="left:17.70px">e</i><i style="left:24.35px">t</i><i style="left:28.12px">e</i><i style="left:36.87px">E</i><i style="left:43.90px">x</i><i style="left:50.39px">t</i><i style="left:54.16px">e</i><i style="left:60.51px">n</i><i style="left:66.55px">s</i><i style="left:72.04px">i</i><i style="left:74.96px">o</i><i style="left:81.34px">n</i></div>
<div class="dj" id="b5" style="left:592px;top:479.0px;"><i style="left:-0.41px">O</i><i style="left:8.09px">K</i></div>
<div class="dj" id="b6" style="left:659px;top:479.0px;"><i style="left:-0.61px">C</i><i style="left:6.85px">a</i><i style="left:13.63px">n</i><i style="left:19.62px">c</i><i style="left:24.99px">e</i><i style="left:31.40px">l</i></div>
</div>
</body></html>
